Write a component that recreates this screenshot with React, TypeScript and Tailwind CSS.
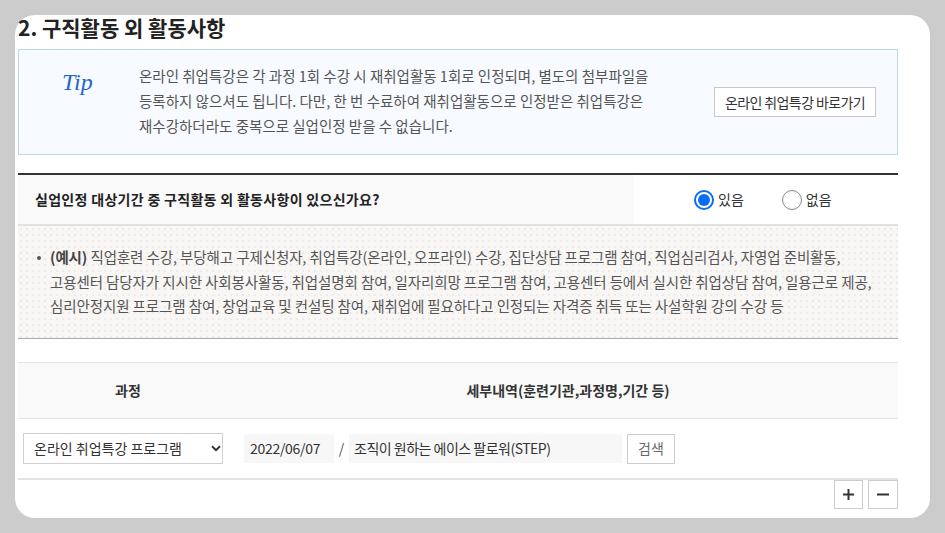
import React from "react";

const KR = { fontFamily: '"Noto Sans CJK KR", "Noto Sans", sans-serif' };

function Radio({ checked, label }: { checked: boolean; label: string }) {
  return (
    <label className="flex items-center gap-[4px] text-[14px] text-[#333]">
      {checked ? (
        <span className="w-[20px] h-[20px] rounded-full border-[2px] border-[#0a6cf5] flex items-center justify-center bg-white">
          <span className="w-[12px] h-[12px] rounded-full bg-[#0a6cf5]" />
        </span>
      ) : (
        <span className="w-[20px] h-[20px] rounded-full border-[1.5px] border-[#858585] bg-white" />
      )}
      <span>{label}</span>
    </label>
  );
}

export default function App() {
  return (
    <div className="w-[945px] h-[533px] bg-[#cccccc] pt-[15px] pl-[15px] overflow-hidden" style={KR}>
      <div className="w-[915px] h-[503px] bg-white rounded-[20px] pl-[3px] pr-[32px] flex flex-col">
        <h2 className="h-[25px] leading-[25px] text-[21px] font-bold text-[#222]">
          2. 구직활동 외 활동사항
        </h2>

        {/* Tip box */}
        <div className="mt-[9px] h-[106px] border border-[#bcd9e3] bg-[#f7fbff] flex items-center">
          <div className="w-[120px] self-start pt-[14px] pl-[43px]">
            <span
              className="text-[#2566c4] text-[24px] italic"
              style={{ fontFamily: '"Liberation Serif", serif' }}
            >
              Tip
            </span>
          </div>
          <p className="text-[14.5px] leading-[25px] text-[#555] w-[570px] -mt-[3px]">
            온라인 취업특강은 각 과정 1회 수강 시 재취업활동 1회로 인정되며, 별도의 첨부파일을
            <br />
            등록하지 않으셔도 됩니다. 다만, 한 번 수료하여 재취업활동으로 인정받은 취업특강은
            <br />
            재수강하더라도 중복으로 실업인정 받을 수 없습니다.
          </p>
          <button className="ml-[5px] w-[162px] h-[30px] border border-[#c8c8c8] bg-white text-[14px] text-[#333] tracking-[-0.6px]">
            온라인 취업특강 바로가기
          </button>
        </div>

        {/* Question row */}
        <div className="mt-[18px] border-t-[2px] border-[#333] flex h-[51px]">
          <div className="w-[616px] bg-[#f9f9f9] flex items-center pl-[17px] text-[14px] font-bold text-[#222] tracking-[0.3px]">
            실업인정 대상기간 중 구직활동 외 활동사항이 있으신가요?
          </div>
          <div className="flex-1 flex items-center pl-[60px] gap-[38px]">
            <Radio checked label="있음" />
            <Radio checked={false} label="없음" />
          </div>
        </div>

        {/* Example block */}
        <div className="border-t-[2px] border-[#e2e2e2] border-b border-b-[#aaaaaa] bg-[#f8f7f5] bg-[radial-gradient(#edebe7_1px,transparent_1.2px)] bg-[length:6px_6px] h-[115px] pt-[19px] pl-[19px] flex">
          <span className="w-[4px] h-[4px] rounded-full bg-[#555] mt-[11px] mr-[9px] shrink-0" />
          <p className="text-[14.5px] leading-[24.5px] text-[#555] tracking-[-0.1px] whitespace-nowrap">
            <b className="text-[#444]">(예시)</b> 직업훈련 수강, 부당해고 구제신청자, 취업특강(온라인, 오프라인) 수강, 집단상담 프로그램 참여, 직업심리검사, 자영업 준비활동,
            <br />
            고용센터 담당자가 지시한 사회봉사활동, 취업설명회 참여, 일자리희망 프로그램 참여, 고용센터 등에서 실시한 취업상담 참여, 일용근로 제공,
            <br />
            심리안정지원 프로그램 참여, 창업교육 및 컨설팅 참여, 재취업에 필요하다고 인정되는 자격증 취득 또는 사설학원 강의 수강 등
          </p>
        </div>

        {/* Table */}
        <div className="mt-[23px] border-t border-[#e3e3e3]">
          <div className="flex h-[56px] bg-[#f9f9f9] border-b border-[#e3e3e3] text-[14px] font-bold text-[#333]">
            <div className="w-[220px] flex items-center justify-center">과정</div>
            <div className="flex-1 flex items-center justify-center">세부내역(훈련기관,과정명,기간 등)</div>
          </div>
          <div className="flex h-[61px] border-b-[2px] border-[#e3e3e3] items-center">
            <div className="w-[220px] pl-[5px]">
              <div className="relative w-[200px] h-[31px]">
                <select
                  className="appearance-none w-[200px] h-[31px] border border-[#d0d0d0] bg-white pl-[10px] text-[14px] text-[#333] outline-none"
                  style={KR}
                  defaultValue="a"
                >
                  <option value="a">온라인 취업특강 프로그램</option>
                </select>
                <svg
                  className="absolute right-[2px] top-[12px] pointer-events-none"
                  width="10"
                  height="7"
                  viewBox="0 0 10 7"
                >
                  <path d="M1 1.2 L5 5.2 L9 1.2" stroke="#333" strokeWidth="2" fill="none" />
                </svg>
              </div>
            </div>
            <div className="flex items-center pl-[6px]">
              <div className="w-[90px] h-[29px] bg-[#f7f7f7] flex items-center pl-[6px] text-[14px] text-[#333] tracking-[-0.3px]">
                2022/06/07
              </div>
              <span className="w-[15px] text-center text-[14px] text-[#555]">/</span>
              <div className="w-[273px] h-[29px] bg-[#f7f7f7] flex items-center pl-[5px] text-[14px] text-[#333] tracking-[-0.5px]">
                조직이 원하는 에이스 팔로워(STEP)
              </div>
              <button className="ml-[5px] w-[48px] h-[30px] border border-[#cccccc] bg-white text-[14px] text-[#666]">
                검색
              </button>
            </div>
          </div>
          <div className="flex justify-end gap-[5px]">
            <button className="w-[29px] h-[29px] border border-[#cccccc] bg-white flex items-center justify-center">
              <svg width="11" height="11" viewBox="0 0 11 11">
                <path d="M5.5 0 V11 M0 5.5 H11" stroke="#333" strokeWidth="2" />
              </svg>
            </button>
            <button className="w-[30px] h-[29px] border border-[#cccccc] bg-white flex items-center justify-center">
              <svg width="12" height="11" viewBox="0 0 12 11">
                <path d="M0 5.5 H12" stroke="#333" strokeWidth="2" />
              </svg>
            </button>
          </div>
        </div>
      </div>
    </div>
  );
}
